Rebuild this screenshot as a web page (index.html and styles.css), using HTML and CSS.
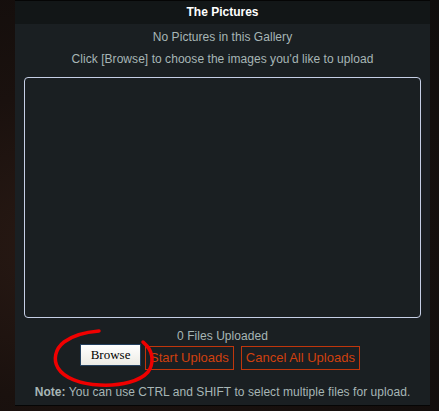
FILE: index.html
```html
<!DOCTYPE html>
<html>
<head>
<meta charset="utf-8">
<link rel="stylesheet" href="styles.css">
</head>
<body>
<div class="page">
  <div class="panel">
    <div class="header">The Pictures</div>
    <div class="body">
      <p class="line first">No Pictures in this Gallery</p>
      <p class="line second">Click [Browse] to choose the images you'd like to upload</p>
      <div class="dropbox"></div>
      <p class="line count">0 Files Uploaded</p>
      <div class="actions">
        <button class="browse">Browse</button>
        <span class="btn">Start Uploads</span>
        <span class="btn">Cancel All Uploads</span>
      </div>
      <p class="line note"><b>Note:</b> You can use CTRL and SHIFT to select multiple files for upload.</p>
    </div>
  </div>
  <svg class="circle" width="439" height="411" viewBox="0 0 439 411">
    <path d="M99 331 C86 332 72 336 64 342 C55 349 53 360 58 368 C64 378 80 384 100 385 C122 386 140 381 148 372 C154 364 153 353 147 346 L143 342" fill="none" stroke="#f00000" stroke-width="3.5" stroke-linecap="round"/>
  </svg>
</div>
</body>
</html>
```
FILE: styles.css
```css
html, body {
  margin: 0;
  padding: 0;
}
body {
  width: 439px;
  height: 411px;
  overflow: hidden;
  background: radial-gradient(ellipse at 20% 60%, #2a1a14 0%, #1a110e 45%, #100c0b 100%);
  font-family: "Liberation Sans", Arial, sans-serif;
}
.page {
  position: relative;
  height: 411px;
  padding: 1px 0 0 15px;
  box-sizing: border-box;
}
.panel {
  width: 415px;
  height: 404px;
  background: #1a1f22;
  border-bottom: 1px solid #050505;
  box-shadow: 0 -1px 0 #050505;
}
.header {
  height: 23px;
  line-height: 23px;
  background: #121617;
  color: #ffffff;
  font-weight: bold;
  font-size: 12px;
  text-align: center;
}
.body {
  padding: 0 9px;
}
.line {
  margin: 0;
  color: #a7b6b6;
  font-size: 12px;
  line-height: 14px;
  text-align: center;
  letter-spacing: 0.05px;
}
.first {
  padding-top: 6px;
}
.second {
  padding-top: 8px;
}
.dropbox {
  margin-top: 11px;
  height: 239px;
  border: 1px solid #c6cfe6;
  border-radius: 4px;
}
.count {
  margin-top: 11px;
}
.actions {
  display: flex;
  justify-content: center;
  align-items: flex-start;
  margin-top: 1px;
  margin-left: -5px;
  height: 26px;
}
.browse {
  width: 61px;
  height: 22px;
  padding: 0;
  margin-right: 4px;
  border: 1px solid #24405e;
  background: linear-gradient(#ffffff, #ecebe4);
  font-family: "Liberation Serif", "Times New Roman", serif;
  font-size: 13px;
  color: #000;
}
.btn {
  margin-top: 2px;
  height: 22px;
  line-height: 22px;
  padding: 0 4px;
  border: 1px solid #c0360c;
  color: #d0400e;
  font-size: 13px;
}
.btn + .btn {
  margin-left: 7px;
}
.circle {
  position: absolute;
  left: 0;
  top: 0;
  pointer-events: none;
}
.note {
  margin-top: 15px;
}
```
